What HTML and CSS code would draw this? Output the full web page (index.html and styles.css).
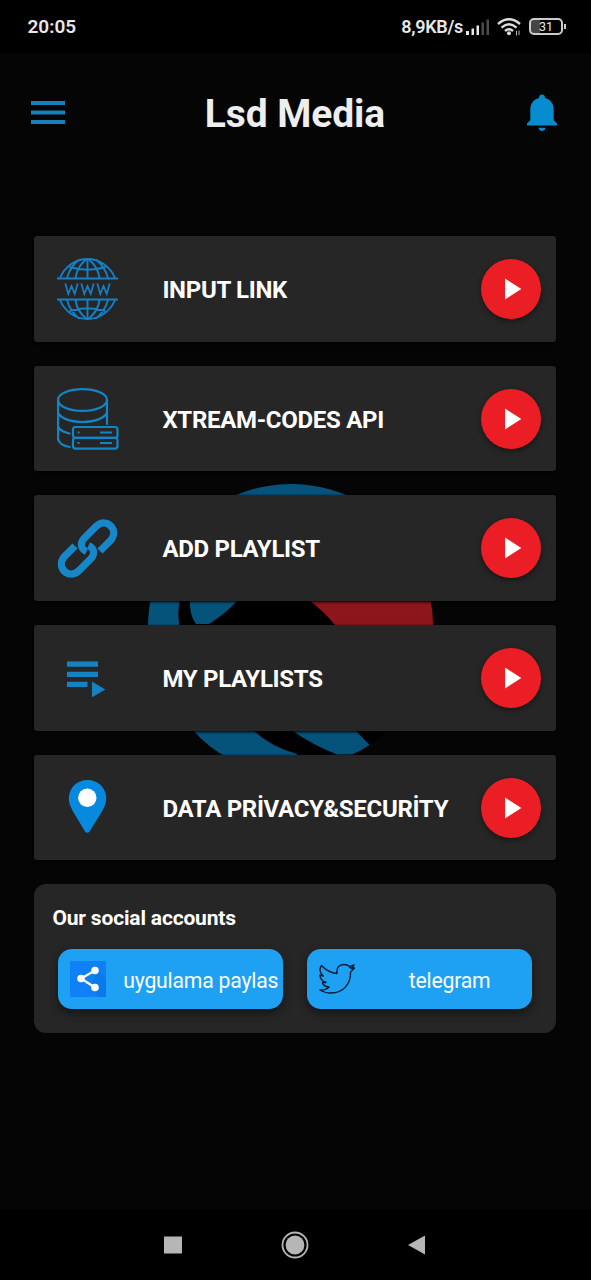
FILE: index.html
```html
<!DOCTYPE html>
<html lang="tr">
<head>
<meta charset="utf-8">
<title>Lsd Media</title>
<link rel="stylesheet" href="styles.css">
</head>
<body>
<svg class="defs" width="0" height="0">
  <symbol id="play" viewBox="0 0 60 60"><path d="M24 19.500v21L40.300 30z" fill="#fff"/></symbol>
</svg>
<div class="phone">
  <header class="status">
    <span class="clock">20:05</span>
    <span class="speed">8,9KB/s</span>
    <svg class="signal" width="24" height="18" viewBox="0 0 24 18"><g fill="#e8e8e8"><path d="M0 13h3v4H0zM5.500 10.500h2.500V17H5.500zM10.500 7.500H13V17h-2.500z"/></g><path d="M15.500 4.500H18V17h-2.500zM20.500 1.500H23V17h-2.500z" fill="#4c4c4c"/></svg>
    <svg class="wifi" width="24" height="20" viewBox="0 0 24 20"><g fill="none" stroke="#ddd" stroke-width="2.400"><path d="M1 7Q12-2.500 23 7"/><path d="M4.500 10.600q7.500-6.500 15 0"/><path d="M8 14q4-3.500 8 0"/></g><circle cx="12" cy="16.300" r="2" fill="#ddd"/><path d="M19.500 14v4.500M22 13.500V18" stroke="#bbb" stroke-width="1"/></svg>
    <span class="battery"><span>31</span></span>
  </header>
  <main class="app">
    <svg class="watermark" width="290" height="290" viewBox="145 482 290 290">
      <circle cx="290.500" cy="627.500" r="142.500" fill="#000"/>
      <path d="M148 627A143 142.500 0 0 1 345 495.500L230 560 180 600Q177 614 179.500 627Z" fill="#05527a"/>
      <path d="M190 600H239Q224 616 209 625H196Q189 616 190 600Z" fill="#05527a"/>
      <path d="M307 600H430.500Q433 612 433 626H335Q323 611 307 600Z" fill="#8c161b"/>
      <path d="M192 730H252Q269 747 297 755V760H230Q208 749 192 730Z" fill="#05527a"/>
      <path d="M290 730H354L369.500 746Q361 752 352 755.500H337Q312 746 290 730Z" fill="#05527a"/>
    </svg>
    <div class="topbar">
      <svg width="36" height="26" viewBox="0 0 36 26"><path d="M1 3h34M1 12.500h34M1 22h34" stroke="#1780bb" stroke-width="3.900"/></svg>
      <h1>Lsd Media</h1>
      <svg width="32" height="40" viewBox="0 0 32 40"><path d="M16 1.500q3 0 3 3.500c5.600 1.400 8.700 6 8.700 11.500v10.700l3.300 3.400v2H1v-2l3.300-3.400V16.500C4.300 11 7.400 6.400 13 5q0-3.500 3-3.500zM12.500 34.700h7q-.7 3.300-3.500 3.300t-3.500-3.300z" fill="#078ccf"/></svg>
    </div>
    <nav class="menu">
      <div class="card">
        <svg class="icon" viewBox="0 0 62 62" fill="none" stroke="#1480c8" stroke-width="1.900"><path d="M0 20.500h61M0 41.500h61M3 20C8 8 19 1 30.500 1S53 8 58 20M3 42c5 12 16 19 27.500 19S53 54 58 42M30.500 1v19M30.500 42v19M22 1.500Q13 9 10 20M39 1.500Q48 9 51 20M29 1.500Q20 9 18.500 20M32 1.500Q41 9 42.500 20M12.500 9q18 5.500 36 0M22 60.500Q13 53 10 42M39 60.500Q48 53 51 42M29 60.500Q20 53 18.500 42M32 60.500Q41 53 42.500 42M12.500 53q18-5.500 36 0"/><path d="M8.300 25.500l3 10.500 3.200-8 3.200 8 3-10.500M24.300 25.500l3 10.500 3.200-8 3.200 8 3-10.500M40.300 25.500l3 10.500 3.200-8 3.200 8 3-10.500" stroke-width="1.700"/></svg>
        <span class="label">INPUT LINK</span>
        <svg class="go"><use href="#play"/></svg>
      </div>
      <div class="card">
        <svg class="icon" viewBox="0 0 62 62" fill="none" stroke="#1285c6" stroke-width="2.200"><ellipse cx="25.500" cy="12" rx="24.500" ry="10.800"/><path d="M1 12v39q1 6 11.500 8M50 12v24M1 24.500c2 5 11 9.500 24.500 9.500S48 29.500 50 24.500M1 38.500q2 5 11.500 7" stroke-linecap="round"/><rect x="16" y="39" width="44.500" height="10.800" rx="2.500"/><rect x="16" y="49.800" width="44.500" height="10.800" rx="2.500"/><path d="M20.500 44.500h2M43 44.500h12M20.500 55h2M43 55h12" stroke-width="2"/></svg>
        <span class="label">XTREAM-CODES API</span>
        <svg class="go"><use href="#play"/></svg>
      </div>
      <div class="card">
        <svg class="icon" viewBox="0 0 62 62" fill="none" stroke="#1688ca" stroke-width="7.200"><path d="M43 33L54 22C62 12 50-1 39.500 8L27 20.500C23 25 23.500 31 29.500 33.500"/><path d="M18 28L7 39C-1 49 11 62 21.500 53L34 40.500C38 36 37.500 30 31.500 27.500"/></svg>
        <span class="label">ADD PLAYLIST</span>
        <svg class="go"><use href="#play"/></svg>
      </div>
      <div class="card">
        <svg class="icon" viewBox="0 0 62 62"><path d="M10 14.500h31v5.200H10zM10 24.800h31V30H10zM10 34.800h20.500V40H10zM35 34.500v15.700L48.300 42.500z" fill="#1583c2"/></svg>
        <span class="label">MY PLAYLISTS</span>
        <svg class="go"><use href="#play"/></svg>
      </div>
      <div class="card">
        <svg class="icon" viewBox="0 0 62 62"><path d="M30.500 3C20 3 11.800 11 11.800 21.500c0 4.500 1.700 8 3.700 12l12.500 21q2.400 2.600 4.600 0L45.500 33.500c2-4 3.700-7.500 3.700-12C49.200 11 41 3 30.500 3z" fill="#078ade"/><circle cx="30.300" cy="20.800" r="9.200" fill="#fff"/></svg>
        <span class="label">DATA PRİVACY&amp;SECURİTY</span>
        <svg class="go"><use href="#play"/></svg>
      </div>
    </nav>
    <section class="social">
      <h2>Our social accounts</h2>
      <div class="buttons">
        <div class="btn">
          <svg width="36" height="36" viewBox="0 0 36 36"><path d="M0 0h36v36H0z" fill="#0e80f8"/><path d="M28 9l8 9v18H29L20 27z" fill="#0b78ec"/><path d="M25 9.500L11 17.500l14 9" fill="none" stroke="#fff" stroke-width="2.300"/><g fill="#fff"><circle cx="25" cy="9.500" r="3.800"/><circle cx="11" cy="17.500" r="3.800"/><circle cx="25" cy="26.500" r="3.800"/></g></svg>
          <span>uygulama paylas</span>
        </div>
        <div class="btn">
          <svg width="36" height="36" viewBox="1 0 36 36"><path d="M2 29c4 .5 7-1 9-3-4-.5-6-2-6.500-4.500h3.500C4 20 2 17.500 2 14l3.300 1C2 12 1 8 3.500 4.500 8 9.500 13 12 19 12.500 18 6 22 3.500 26 3.500c3 0 4.500 1 6 2L36 4l-2 3.500 2.500-.5-4 4C33 22 26 32 13 32 8 32 5 31 2 29zM31 6l4 2" fill="none" stroke="#071c35" stroke-width="1.400" stroke-linejoin="round"/></svg>
          <span>telegram</span>
        </div>
      </div>
    </section>
  </main>
  <footer class="navbar">
    <svg width="28" height="28" viewBox="0 0 28 28"><path d="M5 5.500h18v17H5z" fill="#b6b6b6"/></svg>
    <svg width="28" height="28" viewBox="0 0 28 28"><circle cx="14" cy="14" r="12.500" fill="none" stroke="#b6b6b6" stroke-width="1.800"/><circle cx="14" cy="14" r="9.400" fill="#b6b6b6"/></svg>
    <svg width="28" height="28" viewBox="0 0 28 28"><path d="M22 4.500v19L5 14z" fill="#b6b6b6"/></svg>
  </footer>
</div>
</body>
</html>
```
FILE: styles.css
```css
* { box-sizing: border-box; }
body { margin: 0; background: #000; color: #fff; font-family: Roboto, "Noto Sans", sans-serif; }
svg { display: block; flex: none; }
.defs { position: absolute; }
.phone { width: 591px; height: 1280px; display: flex; flex-direction: column; overflow: hidden; }
.status { height: 53px; flex: none; display: flex; align-items: center; padding: 0 28px 0 27.500px; color: #e8e8e8; }
.clock { font-size: 19px; font-weight: 600; margin-right: auto; }
.speed { font-size: 18px; font-weight: 600; letter-spacing: -0.300px; }
.signal { margin-left: 3px; }
.wifi { margin: 0 8px 0 7px; }
.battery { width: 34px; height: 17px; border: 2px solid #ccc; border-radius: 5px; display: flex; align-items: center; justify-content: center; position: relative; font-size: 12.500px; background: linear-gradient(90deg, #444 30%, #000 30%); }
.battery::after { content: ""; position: absolute; right: -5px; top: 4px; width: 2px; height: 5px; background: #ccc; }
.app { position: relative; flex: none; height: 1156px; background: #050505; padding: 0 35px 0 34.400px; }
.watermark { position: absolute; left: 145px; top: 428px; }
.topbar { position: relative; height: 183px; padding-top: 40px; margin: 0 -2px 0 -4.500px; display: flex; justify-content: space-between; align-items: flex-start; }
.topbar > svg:first-child { margin-top: 7px; }
.topbar > svg:last-child { margin-top: 0; }
.topbar h1 { margin: -2px 0 0 -2px; font-size: 39px; line-height: 46px; font-weight: 700; letter-spacing: -0.100px; color: #eee; }
.menu { position: relative; display: flex; flex-direction: column; gap: 24px; }
.card { height: 105.700px; display: flex; align-items: center; background: #262626; border-radius: 3px; padding: 0 15.200px 0 22.500px; box-shadow: 0 1px 3px #000; }
.icon { width: 62px; height: 62px; margin-top: 1px; }
.label { margin-left: 43.500px; font-size: 24px; font-weight: 700; letter-spacing: -0.300px; white-space: nowrap; margin-top: 2px; }
.go { width: 60px; height: 60px; margin-left: auto; border-radius: 50%; background: #eb1e25; box-shadow: 0 2px 5px #151515; }
.social { position: relative; margin-top: 24px; height: 149px; background: #262626; border-radius: 12px; padding: 21px 24px 0; }
.social h2 { margin: 0 0 0 -6px; font-size: 21px; line-height: 27px; font-weight: 700; letter-spacing: -0.170px; }
.buttons { display: flex; gap: 24px; margin-top: 17px; }
.btn { width: 225px; height: 60px; display: flex; align-items: center; padding-left: 12px; border-radius: 14px; background: #1ea1f2; box-shadow: 0 4px 8px #151515; font-size: 21.200px; letter-spacing: -0.200px; }
.btn span { flex: 1; text-align: center; margin-left: 12px; white-space: nowrap; margin-top: 2px; }
.navbar { flex: 1; display: flex; align-items: center; justify-content: center; gap: 94px; padding-right: 2px; }
```
